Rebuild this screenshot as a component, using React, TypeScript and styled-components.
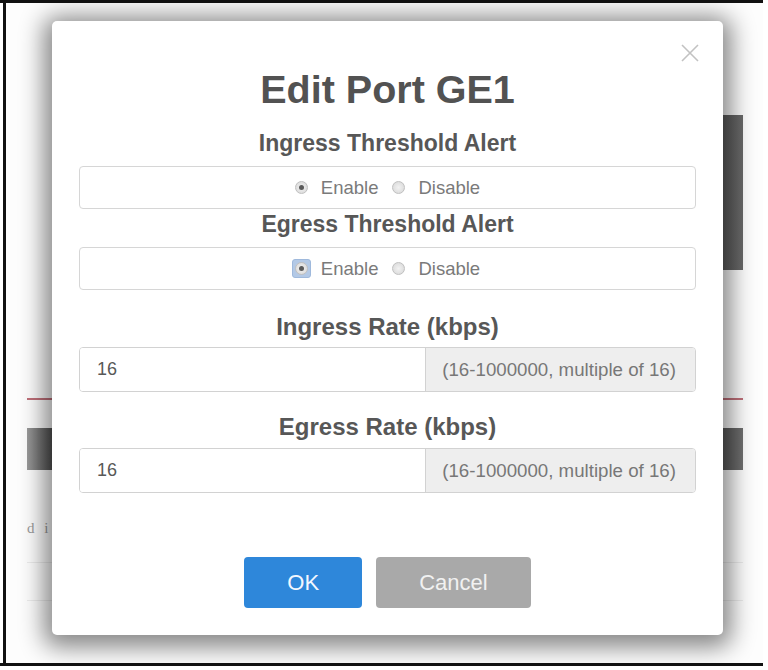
import React from 'react';
import styled, { createGlobalStyle } from 'styled-components';

const Global = createGlobalStyle`
  html, body { margin: 0; padding: 0; background: #ffffff; }
  body { font-family: "Liberation Sans", Arial, Helvetica, sans-serif; }
  * { box-sizing: border-box; }
`;

const Screen = styled.div`
  width: 763px;
  height: 666px;
  border-top: 3px solid #111;
  border-bottom: 3px solid #111;
  background: #fff;
`;

const Frame = styled.div`
  position: relative;
  margin-left: 3px;
  height: 100%;
  border-left: 3px solid #111;
  overflow: hidden;
`;

/* ---------- page behind the dialog ---------- */
const Underlay = styled.div`
  display: flex;
  flex-direction: column;
  padding: 0 20px 0 21px;
  height: 100%;
  background: #fdfdfd;
`;

const SidePanel = styled.div`
  align-self: flex-end;
  margin-top: 112px;
  width: 140px;
  height: 155px;
  background: linear-gradient(90deg, #444 0%, #555 70%, #6a6a6a 100%);
`;

const AccentRule = styled.div`
  margin-top: 128px;
  height: 2px;
  background: #c0707a;
`;

const TableHead = styled.div`
  margin-top: 28px;
  height: 42px;
  background: linear-gradient(90deg, #9a9a9a 0%, #4a4a4a 4%, #555 96%, #707070 100%);
`;

const PageText = styled.div`
  margin-top: 50px;
  font-family: "Liberation Serif", serif;
  font-size: 15px;
  line-height: 17px;
  letter-spacing: 3px;
  color: #9a9a9a;
`;

const PageRow = styled.div<{ $h: number }>`
  height: ${(p) => p.$h}px;
  border-bottom: 1px solid #ececec;
`;

/* ---------- dialog ---------- */
const Modal = styled.div`
  position: absolute;
  left: 46px;
  top: 18px;
  width: 671px;
  display: flex;
  flex-direction: column;
  padding: 46px 27px 27px;
  background: #fff;
  border-radius: 5px;
  box-shadow: 0 4px 24px 8px rgba(0, 0, 0, 0.48);
`;

const Close = styled.button`
  position: absolute;
  top: 23px;
  right: 24px;
  width: 18px;
  height: 18px;
  padding: 0;
  border: none;
  background: transparent;
  display: flex;
`;

const Title = styled.h1`
  margin: 0;
  font-size: 39.5px;
  line-height: 44px;
  font-weight: 700;
  text-align: center;
  color: #525252;
`;

const SectionLabel = styled.h2<{ $top: number; $size: number; $lh: number; $bottom: number }>`
  margin: ${(p) => p.$top}px 0 ${(p) => p.$bottom}px;
  font-size: ${(p) => p.$size}px;
  line-height: ${(p) => p.$lh}px;
  font-weight: 700;
  text-align: center;
  color: #575757;
`;

const RadioBox = styled.div`
  height: 43px;
  border: 1px solid #d6d6d6;
  border-radius: 4px;
  display: flex;
  align-items: center;
  justify-content: center;
  gap: 14px;
  font-size: 18.5px;
  color: #7a7a7a;
`;

const Option = styled.label`
  display: inline-flex;
  align-items: center;
  gap: 13px;
`;

const Focus = styled.span<{ $on: boolean }>`
  display: inline-flex;
  margin: -3px;
  padding: 2px;
  border-radius: 3px;
  background: ${(p) => (p.$on ? '#b3c9e6' : 'transparent')};
  border: 1px solid ${(p) => (p.$on ? '#9fb9dc' : 'transparent')};
`;

const Dot = styled.span<{ $checked: boolean }>`
  width: 13px;
  height: 13px;
  border-radius: 50%;
  border: 1px solid #c0c0c0;
  background: radial-gradient(circle, #f2f2f2 0%, #d6d6d6 100%);
  display: inline-flex;
  align-items: center;
  justify-content: center;
  &::after {
    content: '';
    width: 5px;
    height: 5px;
    border-radius: 50%;
    background: ${(p) => (p.$checked ? '#5a5a5a' : 'transparent')};
  }
`;

const InputGroup = styled.div`
  display: flex;
  height: 45px;
  border: 1px solid #d2d2d2;
  border-radius: 4px;
  overflow: hidden;
`;

const Field = styled.div`
  flex: 1;
  display: flex;
  align-items: center;
  padding-left: 17px;
  font-size: 18px;
  color: #585858;
  background: #fff;
`;

const Addon = styled.div`
  display: flex;
  align-items: center;
  padding: 0 19px 0 16px;
  border-left: 1px solid #d2d2d2;
  background: #eeeeee;
  font-size: 18.7px;
  color: #777;
`;

const Footer = styled.div`
  margin-top: 64px;
  display: flex;
  justify-content: center;
  gap: 14px;
`;

const Button = styled.button<{ $variant: 'primary' | 'muted' }>`
  height: 51px;
  padding: 0 43px;
  border: none;
  border-radius: 4px;
  font-family: "Liberation Sans", Arial, sans-serif;
  font-size: 22px;
  background: ${(p) => (p.$variant === 'primary' ? '#2e87da' : '#a9a9a9')};
  color: ${(p) => (p.$variant === 'primary' ? '#f3f8ff' : '#f1f1f1')};
`;

function Radio({ checked, focused = false }: { checked: boolean; focused?: boolean }) {
  return (
    <Focus $on={focused}>
      <Dot $checked={checked} />
    </Focus>
  );
}

function Toggle({ focused }: { focused?: boolean }) {
  return (
    <RadioBox>
      <Option>
        <Radio checked focused={focused} />
        Enable
      </Option>
      <Option>
        <Radio checked={false} />
        Disable
      </Option>
    </RadioBox>
  );
}

function Rate({ value }: { value: string }) {
  return (
    <InputGroup>
      <Field>{value}</Field>
      <Addon>(16-1000000, multiple of 16)</Addon>
    </InputGroup>
  );
}

export default function App() {
  return (
    <>
      <Global />
      <Screen>
        <Frame>
          <Underlay>
            <SidePanel />
            <AccentRule />
            <TableHead />
            <PageText>d i</PageText>
            <PageRow $h={26} />
            <PageRow $h={38} />
          </Underlay>
          <Modal>
            <Close aria-label="close">
              <svg width="18" height="18" viewBox="0 0 18 18">
                <path d="M1 1 L17 17 M17 1 L1 17" stroke="#c2c2c2" strokeWidth="1.6" />
              </svg>
            </Close>
            <Title>Edit Port GE1</Title>
            <SectionLabel $top={19} $bottom={10} $size={23} $lh={26}>
              Ingress Threshold Alert
            </SectionLabel>
            <Toggle />
            <SectionLabel $top={2} $bottom={10} $size={23} $lh={26}>
              Egress Threshold Alert
            </SectionLabel>
            <Toggle focused />
            <SectionLabel $top={23} $bottom={6} $size={24} $lh={28}>
              Ingress Rate (kbps)
            </SectionLabel>
            <Rate value="16" />
            <SectionLabel $top={21} $bottom={7} $size={24} $lh={28}>
              Egress Rate (kbps)
            </SectionLabel>
            <Rate value="16" />
            <Footer>
              <Button $variant="primary">OK</Button>
              <Button $variant="muted">Cancel</Button>
            </Footer>
          </Modal>
        </Frame>
      </Screen>
    </>
  );
}
